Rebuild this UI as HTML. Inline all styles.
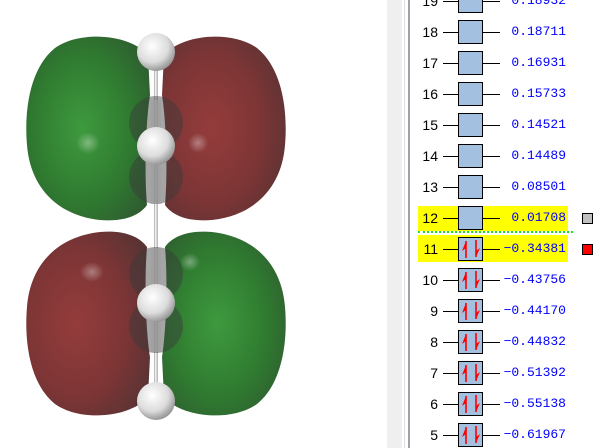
<!DOCTYPE html>
<html><head><meta charset="utf-8"><style>
html,body{margin:0;padding:0;width:603px;height:448px;overflow:hidden;background:#fff;position:relative}
.a{position:absolute}
.n{position:absolute;width:31px;text-align:right;font:14px "Liberation Sans",sans-serif;color:#000;left:407px;line-height:16px}
.v{position:absolute;width:82px;text-align:right;left:484px;font:13px "Liberation Mono",monospace;color:#0000ff;line-height:16px}
.box{position:absolute;left:458px;width:23px;height:22px;border:1px solid #000;background:#a3c0e0}
.ln{position:absolute;height:1px;background:#000}
</style></head><body>
<svg class="a" style="left:0;top:0" width="387" height="448" viewBox="0 0 387 448">
<defs>
<radialGradient id="g" cx="0.45" cy="0.5" r="0.8"><stop offset="0" stop-color="#3e9a3e"/><stop offset="0.5" stop-color="#2f7a30"/><stop offset="1" stop-color="#2f4a30"/></radialGradient>
<radialGradient id="r" cx="0.4" cy="0.5" r="0.8"><stop offset="0" stop-color="#953c3c"/><stop offset="0.5" stop-color="#7d3535"/><stop offset="1" stop-color="#4a3234"/></radialGradient>
<radialGradient id="h" cx="0.4" cy="0.35" r="0.7"><stop offset="0" stop-color="#ffffff"/><stop offset="0.6" stop-color="#dcdcdc"/><stop offset="1" stop-color="#8a8a8a"/></radialGradient>
<radialGradient id="gl" cx="0.5" cy="0.5" r="0.5"><stop offset="0" stop-color="#fff" stop-opacity="0.35"/><stop offset="1" stop-color="#fff" stop-opacity="0"/></radialGradient>
</defs>
<path d="M148,55 C130,34 80,30 55,48 C30,68 24,110 27,145 C30,185 55,215 100,220 C125,222 140,215 147,205 C144,170 146,120 150,95 Z" fill="url(#g)"/>
<path d="M164,55 C182,34 232,30 257,48 C282,68 288,110 285,145 C282,185 257,215 212,220 C187,222 172,215 165,205 C168,170 166,120 162,95 Z" fill="url(#r)"/>
<path d="M148,397 C130,418 80,422 55,404 C30,384 24,342 27,307 C30,267 55,237 100,232 C125,230 140,237 147,247 C144,282 146,332 150,357 Z" fill="url(#r)"/>
<path d="M164,397 C182,418 232,422 257,404 C282,384 288,342 285,307 C282,267 257,237 212,232 C187,230 172,237 165,247 C168,282 166,332 162,357 Z" fill="url(#g)"/>
<ellipse cx="88" cy="143" rx="12" ry="11" fill="url(#gl)"/>
<ellipse cx="198" cy="143" rx="10" ry="10" fill="url(#gl)"/>
<ellipse cx="92" cy="272" rx="12" ry="10" fill="url(#gl)"/>
<ellipse cx="190" cy="262" rx="10" ry="9" fill="url(#gl)"/>
<rect x="154" y="60" width="4" height="335" fill="#bdbdbd"/>
<rect x="155" y="60" width="1.5" height="335" fill="#eeeeee"/>
<g opacity="0.45">
<circle cx="156" cy="123" r="27" fill="#3a3a3a"/>
<circle cx="156" cy="177" r="27" fill="#3a3a3a"/>
<circle cx="156" cy="274" r="27" fill="#3a3a3a"/>
<circle cx="156" cy="326" r="27" fill="#3a3a3a"/>
</g>
<rect x="151" y="100" width="10" height="104" fill="#a0a0a0" opacity="0.7"/>
<rect x="151" y="248" width="10" height="104" fill="#a0a0a0" opacity="0.7"/>
<circle cx="156" cy="52" r="19" fill="url(#h)"/>
<circle cx="156" cy="146" r="19" fill="url(#h)"/>
<circle cx="156" cy="303" r="19" fill="url(#h)"/>
<circle cx="156" cy="401" r="19" fill="url(#h)"/>
</svg>
<div class="a" style="left:387px;top:0;width:15px;height:448px;background:#efefef"></div>
<div class="a" style="left:404px;top:0;width:1px;height:448px;background:#dcdcdc"></div>
<div class="a" style="left:408px;top:0;width:2px;height:448px;background:#a0a0a8"></div>
<div class="a" style="left:418px;top:206px;width:150px;height:25px;background:#ffff00"></div>
<div class="a" style="left:418px;top:235px;width:150px;height:27px;background:#ffff00"></div>
<div class="a" style="left:418px;top:231px;width:155px;height:0;border-top:2px dotted #22dd22"></div>
<div class="a" style="left:582px;top:213px;width:9px;height:9px;border:1px solid #000;background:#c0c0c0"></div>
<div class="a" style="left:582px;top:244px;width:9px;height:9px;border:1px solid #000;background:#ff0000"></div>
<svg width="0" height="0" style="position:absolute"><defs><g id="arr"><path d="M7,20 V3" stroke="#f00" stroke-width="1.6"/><path d="M7,3 L3,13 L7,10 Z" fill="#f00"/><path d="M17,2 V19" stroke="#f00" stroke-width="1.6"/><path d="M17,19 L21,10 L17,13 Z" fill="#f00"/></g></defs></svg>
<div class="n" style="top:-7px">19</div><div class="ln" style="left:443px;top:1px;width:15px"></div><div class="box" style="top:-11px"></div><div class="ln" style="left:483px;top:1px;width:17px"></div><div class="v" style="top:-7px">0.18932</div>
<div class="n" style="top:24px">18</div><div class="ln" style="left:443px;top:32px;width:15px"></div><div class="box" style="top:20px"></div><div class="ln" style="left:483px;top:32px;width:17px"></div><div class="v" style="top:24px">0.18711</div>
<div class="n" style="top:55px">17</div><div class="ln" style="left:443px;top:63px;width:15px"></div><div class="box" style="top:51px"></div><div class="ln" style="left:483px;top:63px;width:17px"></div><div class="v" style="top:55px">0.16931</div>
<div class="n" style="top:86px">16</div><div class="ln" style="left:443px;top:94px;width:15px"></div><div class="box" style="top:82px"></div><div class="ln" style="left:483px;top:94px;width:17px"></div><div class="v" style="top:86px">0.15733</div>
<div class="n" style="top:117px">15</div><div class="ln" style="left:443px;top:125px;width:15px"></div><div class="box" style="top:113px"></div><div class="ln" style="left:483px;top:125px;width:17px"></div><div class="v" style="top:117px">0.14521</div>
<div class="n" style="top:148px">14</div><div class="ln" style="left:443px;top:156px;width:15px"></div><div class="box" style="top:144px"></div><div class="ln" style="left:483px;top:156px;width:17px"></div><div class="v" style="top:148px">0.14489</div>
<div class="n" style="top:179px">13</div><div class="ln" style="left:443px;top:187px;width:15px"></div><div class="box" style="top:175px"></div><div class="ln" style="left:483px;top:187px;width:17px"></div><div class="v" style="top:179px">0.08501</div>
<div class="n" style="top:210px">12</div><div class="ln" style="left:443px;top:218px;width:15px"></div><div class="box" style="top:206px"></div><div class="ln" style="left:483px;top:218px;width:17px"></div><div class="v" style="top:210px">0.01708</div>
<div class="n" style="top:241px">11</div><div class="ln" style="left:443px;top:249px;width:15px"></div><div class="box" style="top:237px"><svg width="23" height="22"><use href="#arr"/></svg></div><div class="ln" style="left:483px;top:249px;width:17px"></div><div class="v" style="top:241px">&minus;0.34381</div>
<div class="n" style="top:272px">10</div><div class="ln" style="left:443px;top:280px;width:15px"></div><div class="box" style="top:268px"><svg width="23" height="22"><use href="#arr"/></svg></div><div class="ln" style="left:483px;top:280px;width:17px"></div><div class="v" style="top:272px">&minus;0.43756</div>
<div class="n" style="top:303px">9</div><div class="ln" style="left:443px;top:311px;width:15px"></div><div class="box" style="top:299px"><svg width="23" height="22"><use href="#arr"/></svg></div><div class="ln" style="left:483px;top:311px;width:17px"></div><div class="v" style="top:303px">&minus;0.44170</div>
<div class="n" style="top:334px">8</div><div class="ln" style="left:443px;top:342px;width:15px"></div><div class="box" style="top:330px"><svg width="23" height="22"><use href="#arr"/></svg></div><div class="ln" style="left:483px;top:342px;width:17px"></div><div class="v" style="top:334px">&minus;0.44832</div>
<div class="n" style="top:365px">7</div><div class="ln" style="left:443px;top:373px;width:15px"></div><div class="box" style="top:361px"><svg width="23" height="22"><use href="#arr"/></svg></div><div class="ln" style="left:483px;top:373px;width:17px"></div><div class="v" style="top:365px">&minus;0.51392</div>
<div class="n" style="top:396px">6</div><div class="ln" style="left:443px;top:404px;width:15px"></div><div class="box" style="top:392px"><svg width="23" height="22"><use href="#arr"/></svg></div><div class="ln" style="left:483px;top:404px;width:17px"></div><div class="v" style="top:396px">&minus;0.55138</div>
<div class="n" style="top:427px">5</div><div class="ln" style="left:443px;top:435px;width:15px"></div><div class="box" style="top:423px"><svg width="23" height="22"><use href="#arr"/></svg></div><div class="ln" style="left:483px;top:435px;width:17px"></div><div class="v" style="top:427px">&minus;0.61967</div>
</body></html>
